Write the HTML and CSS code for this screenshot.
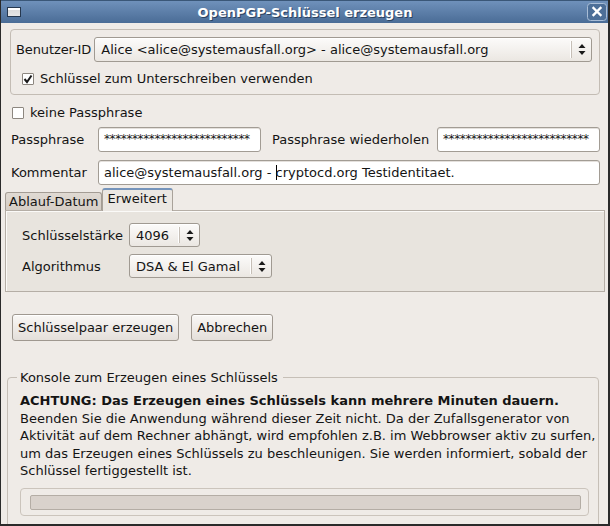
FILE: index.html
```html
<!DOCTYPE html>
<html lang="de">
<head>
<meta charset="utf-8">
<title>OpenPGP-Schlüssel erzeugen</title>
<link rel="stylesheet" href="styles.css">
</head>
<body>
<div class="window">
  <div class="titlebar">
    <div class="tb-icon"></div>
    <div class="tb-title">OpenPGP-Schlüssel erzeugen</div>
    <div class="tb-close">
      <svg width="20" height="18" viewBox="0 0 20 18">
        <rect x="0.5" y="0.5" width="19" height="17" rx="3" fill="#4d6f98" stroke="#a9bdd6"/>
        <path d="M6.5 5 L13.5 12 M13.5 5 L6.5 12" stroke="#ffffff" stroke-width="2.4" stroke-linecap="square"/>
      </svg>
    </div>
  </div>
  <div class="content">
    <div class="group">
      <div class="row">
        <span class="lbl">Benutzer-ID</span>
        <div class="combo combo-user">
          <span class="combo-text">Alice &lt;alice@systemausfall.org&gt; - alice@systemausfall.org</span>
          <span class="combo-arrow"><svg width="8" height="11" viewBox="0 0 8 11"><path d="M4 0 L7.5 4 L0.5 4 Z M0.5 7 L7.5 7 L4 11 Z" fill="#1a1a1a"/></svg></span>
        </div>
      </div>
      <div class="check check-sign">
        <span class="box"><svg width="10" height="10" viewBox="0 0 10 10"><path d="M1.5 5 L4 8 L8.5 1.5" fill="none" stroke="#1a1a1a" stroke-width="2"/></svg></span>
        <span>Schlüssel zum Unterschreiben verwenden</span>
      </div>
    </div>

    <div class="check check-nopass">
      <span class="box"></span>
      <span>keine Passphrase</span>
    </div>

    <div class="form-grid">
      <span class="lbl">Passphrase</span>
      <div class="entry pw">**************************</div>
      <span class="lbl lbl2">Passphrase wiederholen</span>
      <div class="entry pw">**************************</div>
      <span class="lbl">Kommentar</span>
      <div class="entry comment">alice@systemausfall.org -&nbsp;<span class="caret"></span>cryptocd.org Testidentitaet.</div>
    </div>

    <div class="notebook">
      <div class="tabs">
        <div class="tab">Ablauf-Datum</div>
        <div class="tab active">Erweitert</div>
      </div>
      <div class="panel">
        <div class="prow">
          <span class="plbl">Schlüsselstärke</span>
          <div class="combo combo-size">
            <span class="combo-text">4096</span>
            <span class="combo-arrow"><svg width="8" height="11" viewBox="0 0 8 11"><path d="M4 0 L7.5 4 L0.5 4 Z M0.5 7 L7.5 7 L4 11 Z" fill="#1a1a1a"/></svg></span>
          </div>
        </div>
        <div class="prow">
          <span class="plbl">Algorithmus</span>
          <div class="combo combo-algo">
            <span class="combo-text">DSA &amp; El Gamal</span>
            <span class="combo-arrow"><svg width="8" height="11" viewBox="0 0 8 11"><path d="M4 0 L7.5 4 L0.5 4 Z M0.5 7 L7.5 7 L4 11 Z" fill="#1a1a1a"/></svg></span>
          </div>
        </div>
      </div>
    </div>

    <div class="buttons">
      <button class="btn">Schlüsselpaar erzeugen</button>
      <button class="btn">Abbrechen</button>
    </div>

    <fieldset class="console">
      <legend>Konsole zum Erzeugen eines Schlüssels</legend>
      <div class="console-body">
        <p class="msg"><b>ACHTUNG: Das Erzeugen eines Schlüssels kann mehrere Minuten dauern.</b><br>Beenden Sie die Anwendung während dieser Zeit nicht. Da der Zufallsgenerator von<br>Aktivität auf dem Rechner abhängt, wird empfohlen z.B. im Webbrowser aktiv zu surfen,<br>um das Erzeugen eines Schlüssels zu beschleunigen. Sie werden informiert, sobald der<br>Schlüssel fertiggestellt ist.</p>
        <div class="progress-frame"><div class="trough"></div></div>
      </div>
    </fieldset>
  </div>
</div>
</body>
</html>
```

FILE: styles.css
```css
html, body {
  margin: 0;
  padding: 0;
  background: #2d2d2d;
}

.window {
  width: 610px;
  height: 526px;
  box-sizing: border-box;
  border-left: 1px solid #2a2a2a;
  border-right: 2px solid #2a2a2a;
  border-bottom: 2px solid #2a2a2a;
  background: #efebe7;
  overflow: hidden;
  font-family: "DejaVu Sans", sans-serif;
  font-size: 13px;
  color: #141414;
}

/* Title bar */
.titlebar {
  height: 23px;
  display: flex;
  align-items: center;
  background: linear-gradient(#6f91bb, #4a6c96);
  border-top: 1px solid #3a5778;
  box-sizing: border-box;
}

.tb-icon {
  width: 14px;
  height: 10px;
  margin-left: 6px;
  box-sizing: border-box;
  border: 1px solid #26384f;
  background: linear-gradient(#ffffff 0, #ffffff 30%, #dcdcdc 30%, #e6e6e6);
}

.tb-title {
  flex: 1;
  text-align: center;
  color: #ffffff;
  font-weight: bold;
  font-size: 13px;
  text-shadow: 1px 1px 0 #2b4260;
  padding-left: 2px;
}

.tb-close {
  width: 20px;
  height: 18px;
  margin-right: 1px;
  display: flex;
}

/* Content */
.content {
  padding: 6px 8px 0 9px;
}

.group {
  border: 1px solid #c3bcb4;
  border-radius: 4px;
  padding: 7px 7px 7px 5px;
}

.row {
  display: flex;
  align-items: center;
  height: 25px;
}

.lbl {
  white-space: nowrap;
}

.row .lbl {
  margin-right: 3px;
  letter-spacing: -0.1px;
}

.combo {
  height: 25px;
  box-sizing: border-box;
  border: 1px solid #a09a92;
  border-radius: 3px;
  background: linear-gradient(#fcfbfa, #ebe7e2);
  display: flex;
  align-items: center;
  box-shadow: inset 0 1px 0 #ffffff;
}

.combo-user {
  flex: 1;
}

.combo-text {
  flex: 1;
  padding-left: 6px;
  white-space: nowrap;
  overflow: hidden;
}

.combo-arrow {
  width: 19px;
  align-self: stretch;
  display: flex;
  align-items: center;
  justify-content: center;
  border-left: 1px solid #c6bfb7;
  margin: 3px 0;
  box-shadow: -1px 0 0 #ffffff;
}

.check {
  display: flex;
  align-items: center;
  height: 17px;
  white-space: nowrap;
}

.box {
  width: 12px;
  height: 12px;
  box-sizing: border-box;
  border: 1px solid #8d8780;
  background: #ffffff;
  border-radius: 1px;
  margin-right: 6px;
  display: flex;
  align-items: center;
  justify-content: center;
}

.check-sign {
  margin-top: 8px;
  margin-left: 6px;
}

.check-nopass {
  margin-top: 9px;
  margin-left: 2px;
}

/* Passphrase / comment grid */
.form-grid {
  margin-top: 6px;
  display: grid;
  grid-template-columns: 88px 163px 176px 163px;
  grid-template-rows: 25px 25px;
  row-gap: 8px;
  align-items: center;
}

.form-grid .lbl {
  padding-left: 1px;
}

.form-grid .lbl2 {
  padding-left: 11px;
}

.entry {
  height: 25px;
  box-sizing: border-box;
  border: 1px solid #a29c94;
  border-radius: 3px;
  background: #ffffff;
  padding: 0 5px;
  display: flex;
  align-items: center;
  white-space: nowrap;
  overflow: hidden;
  box-shadow: inset 0 1px 0 #e4e0dc;
}

.pw {
  font-size: 12px;
  letter-spacing: -0.4px;
  align-items: flex-start;
  padding-top: 4px;
}

.comment {
  grid-column: 2 / 5;
}

.caret {
  display: inline-block;
  width: 0;
  height: 15px;
  border-left: 1px solid #000000;
  margin-right: -1px;
}

/* Notebook */
.notebook {
  margin: 3px -5px 0 -5px;
}

.tabs {
  display: flex;
  align-items: flex-end;
  height: 22px;
}

.tab {
  height: 18px;
  box-sizing: border-box;
  padding: 0 2px 0 3px;
  border: 1px solid #a39c94;
  border-bottom: none;
  border-radius: 3px 3px 0 0;
  background: linear-gradient(#e0dad3, #d5cdc5);
  display: flex;
  align-items: center;
  white-space: nowrap;
}

.tab.active {
  height: 23px;
  margin-bottom: -1px;
  padding: 0 5px 4px 5px;
  border-color: #a9a29a;
  border-top: 2px solid #7594bb;
  background: #ebe7e2;
  position: relative;
  z-index: 1;
}

.panel {
  height: 82px;
  box-sizing: border-box;
  border: 1px solid #b5aea6;
  background: #e8e4de;
  box-shadow: inset 1px 1px 0 #fbfaf8;
  padding: 12px 16px;
}

.prow {
  display: flex;
  align-items: center;
  height: 24px;
}

.prow + .prow {
  margin-top: 7px;
}

.plbl {
  width: 107px;
  white-space: nowrap;
}

.combo-size {
  width: 71px;
  height: 24px;
}

.combo-algo {
  width: 143px;
  height: 24px;
}

/* Buttons */
.buttons {
  margin-top: 22px;
  margin-left: 2px;
  display: flex;
  gap: 12px;
}

.btn {
  height: 27px;
  padding: 0 5px;
  font-family: inherit;
  font-size: inherit;
  color: inherit;
  border: 1px solid #9f9890;
  border-radius: 3px;
  background: linear-gradient(#f9f7f5, #e4dfda);
  box-shadow: inset 0 1px 0 #ffffff;
}

/* Console */
.console {
  margin: 28px 1px 0 -3px;
  padding: 0;
  border: 1px solid #c6bfb7;
  border-radius: 4px;
  min-width: 0;
  height: 200px;
}

.console legend {
  margin-left: 9px;
  padding: 0 5px 0 3px;
  line-height: 17px;
}

.console-body {
  padding: 6px 9px 0 12px;
}

.msg {
  margin: 0;
  line-height: 17.5px;
  white-space: nowrap;
}

.progress-frame {
  margin-top: 8px;
  height: 28px;
  box-sizing: border-box;
  border: 1px solid #cbc4bc;
  border-radius: 4px;
  padding: 6px 7px 0 9px;
}

.trough {
  height: 15px;
  box-sizing: border-box;
  border: 1px solid #b4ada5;
  border-radius: 2px;
  background: #d9d2cc;
}
```
